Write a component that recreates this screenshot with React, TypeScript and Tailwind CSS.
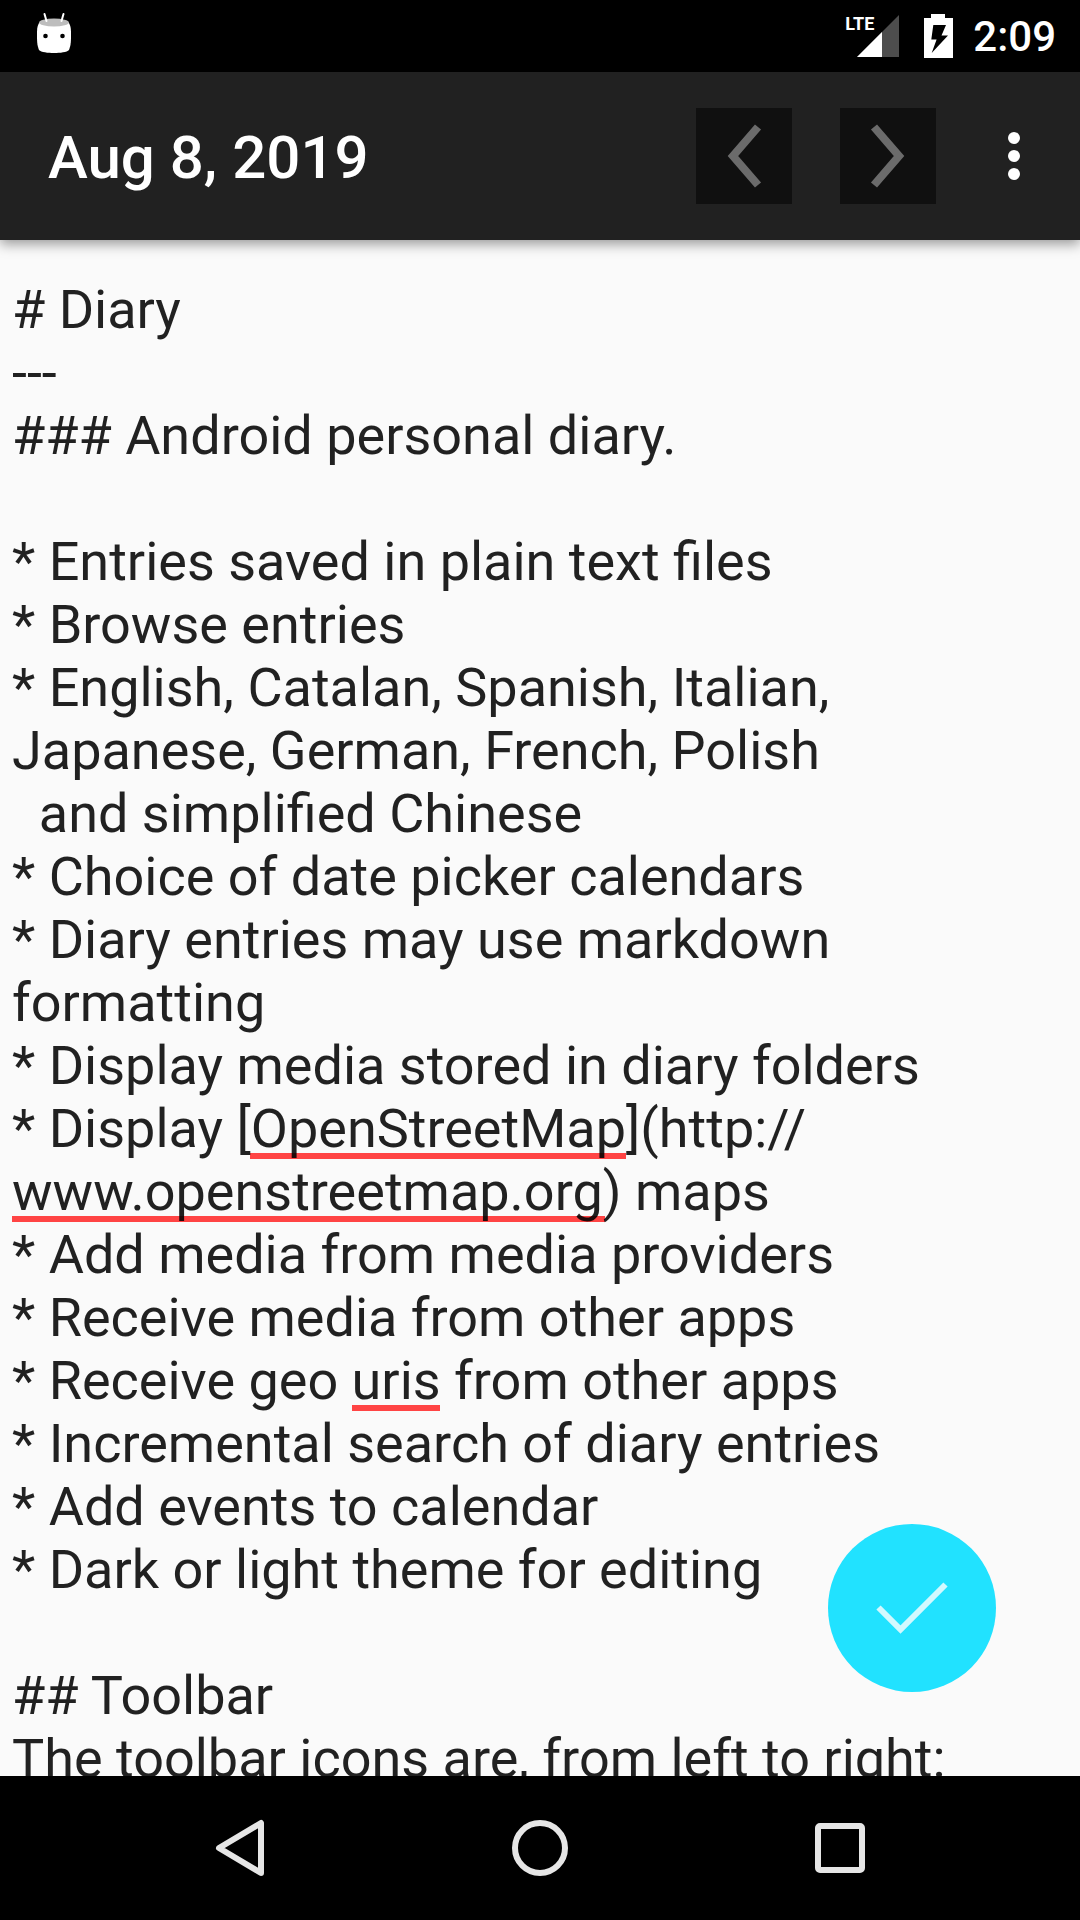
import { useState } from "react";

const ENTRY = `# Diary
---
### Android personal diary.

* Entries saved in plain text files
* Browse entries
* English, Catalan, Spanish, Italian, Japanese, German, French, Polish
  and simplified Chinese
* Choice of date picker calendars
* Diary entries may use markdown formatting
* Display media stored in diary folders
* Display [OpenStreetMap](http://
www.openstreetmap.org) maps
* Add media from media providers
* Receive media from other apps
* Receive geo uris from other apps
* Incremental search of diary entries
* Add events to calendar
* Dark or light theme for editing

## Toolbar
The toolbar icons are, from left to right:`;

function StatusBar() {
  return (
    <div className="flex h-[72px] shrink-0 items-center bg-black px-6 text-white">
      <svg className="ml-3 h-[72px] w-9" viewBox="0 0 36 72" aria-label="Debugging connected" role="img">
        <path
          d="M3 23 C1 27 1 29 1 36 C1 43 1.500 46 3 50 C5 52.200 12 53 18 53 C24 53 31 52.200 33 50 C34.500 46 35 43 35 36 C35 29 35 27 33 23 Z"
          fill="#fff"
        />
        <ellipse cx="18" cy="22.500" rx="15" ry="4" fill="#bdbdbd" />
        <path d="M8.500 14 L10.500 21 M27.500 14 L25.500 21" stroke="#fff" strokeWidth="2" strokeLinecap="round" fill="none" />
        <circle cx="9.500" cy="36" r="2.300" fill="#000" />
        <circle cx="26.500" cy="36" r="2.300" fill="#000" />
      </svg>
      <div className="ml-auto flex items-center">
        <div className="relative">
          <svg className="h-[72px] w-[54px]" viewBox="0 0 54 72" aria-hidden="true">
            <path d="M12 57 L54 15 V57 Z" fill="#4d4d4d" />
            <path d="M12 57 L37 32 V57 Z" fill="#fff" />
          </svg>
          <span className="absolute top-3 left-0 text-[18px] leading-6 font-bold">LTE</span>
        </div>
        <svg className="ml-6 h-[72px] w-[30px]" viewBox="0 0 30 72" aria-label="Battery charging" role="img">
          <path d="M8 14 H22 V18 H30 V58 H1 V18 H8 Z" fill="#fff" />
          <path d="M10.300 25 H23 L18.500 35.500 H25 L8.700 53 L13.600 39.500 H8.300 Z" fill="#000" />
        </svg>
        <span className="ml-5 pt-0.5 text-[42px] leading-[70px] font-medium">2:09</span>
      </div>
    </div>
  );
}

function Chevron({ d }: { d: string }) {
  return (
    <svg className="size-24" viewBox="0 0 96 96" fill="none" stroke="#6b6b6b" strokeWidth="8" aria-hidden="true">
      <path d={d} />
    </svg>
  );
}

function AppBar() {
  return (
    <header className="relative z-10 flex h-[168px] shrink-0 items-center bg-[#212121] pr-3 pl-12 shadow-[0_4px_12px_rgba(0,0,0,0.4)]">
      <h1 className="mr-auto pt-1 text-[60px] leading-[72px] font-medium text-white">Aug 8, 2019</h1>
      <button type="button" aria-label="Previous entry" className="bg-[#101010]">
        <Chevron d="M62 19 L37 48 L62 77" />
      </button>
      <button type="button" aria-label="Next entry" className="ml-12 bg-[#101010]">
        <Chevron d="M34 19 L59 48 L34 77" />
      </button>
      <button type="button" aria-label="More options" className="ml-6 flex h-24 w-[108px] items-center justify-center">
        <svg className="h-12 w-3" viewBox="0 0 12 48" fill="#fff" aria-hidden="true">
          <circle cx="6" cy="6" r="6" />
          <circle cx="6" cy="24" r="6" />
          <circle cx="6" cy="42" r="6" />
        </svg>
      </button>
    </header>
  );
}

function Editor() {
  const [text, setText] = useState(ENTRY);
  return (
    <main className="relative flex min-h-0 flex-1 bg-[#fafafa]">
      {/* Spelling marks lie under the translucent text */}
      <div aria-hidden="true" className="absolute inset-0 overflow-hidden">
        <div className="absolute top-[913px] left-[250px] h-1.5 w-[376px] bg-[#ff4444]" />
        <div className="absolute top-[976px] left-3 h-1.5 w-[593px] bg-[#ff4444]" />
        <div className="absolute top-[1165px] left-[352px] h-1.5 w-[88px] bg-[#ff4444]" />
      </div>
      <textarea
        aria-label="Diary entry"
        spellCheck={false}
        value={text}
        onChange={(e) => setText(e.target.value)}
        className="relative block w-full flex-1 resize-none overflow-hidden bg-transparent px-3 pt-[38px] text-[54px] leading-[63px] text-black/87 outline-none"
      />
      <button
        type="button"
        aria-label="Accept"
        className="absolute right-[84px] bottom-[84px] size-[168px] rounded-full bg-[#21e2ff]"
      >
        <svg className="size-full" viewBox="0 0 168 168" fill="none" stroke="#d2f9ff" strokeWidth="6" aria-hidden="true">
          <path d="M50.500 83.500 L72.500 105.500 L117.500 60.500" />
        </svg>
      </button>
    </main>
  );
}

function NavBar() {
  return (
    <nav className="flex h-36 shrink-0 items-center justify-center bg-black">
      <button type="button" aria-label="Back" className="flex w-[300px] justify-center">
        <svg className="size-[72px]" viewBox="0 0 72 72" fill="none" stroke="#e6e6e6" strokeWidth="6" strokeLinejoin="round" aria-hidden="true">
          <path d="M57 11 V61 L15 36 Z" />
        </svg>
      </button>
      <button type="button" aria-label="Home" className="flex w-[300px] justify-center">
        <svg className="size-[72px]" viewBox="0 0 72 72" fill="none" stroke="#e6e6e6" strokeWidth="6" aria-hidden="true">
          <circle cx="36" cy="36" r="25" />
        </svg>
      </button>
      <button type="button" aria-label="Overview" className="flex w-[300px] justify-center">
        <svg className="size-[72px]" viewBox="0 0 72 72" fill="none" stroke="#e6e6e6" strokeWidth="6" aria-hidden="true">
          <rect x="14" y="14" width="44" height="44" rx="2" />
        </svg>
      </button>
    </nav>
  );
}

export default function App() {
  return (
    <div className="flex h-screen flex-col overflow-hidden font-[Roboto,sans-serif]">
      <StatusBar />
      <AppBar />
      <Editor />
      <NavBar />
    </div>
  );
}
